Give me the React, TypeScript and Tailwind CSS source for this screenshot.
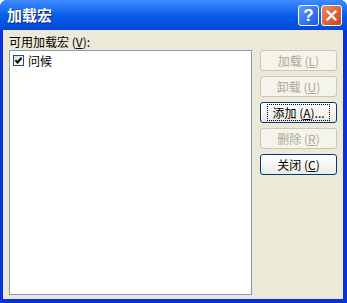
import React from "react";

const font = { fontFamily: '"Noto Sans CJK SC", "Liberation Sans", sans-serif' };

function XpButton({ label, hotkey, suffix = "", disabled = false, focused = false }) {
  return (
    <button
      className={
        "h-[21px] w-[77px] rounded-[3px] border text-[12px] leading-none flex items-center justify-center " +
        (disabled
          ? "border-[#c9c7ba] bg-[#f5f4ea] text-[#aca899]"
          : "border-[#003c74] bg-gradient-to-b from-[#ffffff] to-[#ecebe6] text-black")
      }
    >
      <span
        className={
          "flex items-center px-1 h-[15px] " +
          (focused ? "outline outline-1 outline-dotted outline-black" : "")
        }
      >
        {label} (<span className="underline underline-offset-1">{hotkey}</span>){suffix}
      </span>
    </button>
  );
}

export default function App() {
  return (
    <div className="w-[347px] h-[303px] flex flex-col rounded-t-[7px] bg-[#0831d9] overflow-hidden" style={font}>
      {/* title bar */}
      <div className="h-[30px] flex items-center justify-between pl-[7px] pr-[5px] bg-gradient-to-b from-[#3c8dff] via-[#0a5ee8] to-[#0449d8]">
        <span className="text-white font-bold text-[15px] [text-shadow:1px_1px_0_#0a1e80]">加载宏</span>
        <div className="flex gap-[2px]">
          <div className="w-[21px] h-[21px] rounded-[3px] border border-white bg-gradient-to-br from-[#5b9bff] to-[#1559e0] flex items-center justify-center text-white font-bold text-[17px] leading-none" style={{ fontFamily: '"Liberation Sans", sans-serif' }}>
            ?
          </div>
          <div className="w-[21px] h-[21px] rounded-[3px] border border-white bg-gradient-to-br from-[#f08a60] to-[#c9401a] flex items-center justify-center">
            <svg width="11" height="11" viewBox="0 0 11 11">
              <path d="M1.5 1.5 L9.5 9.5 M9.5 1.5 L1.5 9.5" stroke="white" strokeWidth="2.2" strokeLinecap="square" />
            </svg>
          </div>
        </div>
      </div>
      {/* client */}
      <div className="flex-1 flex ml-[3px] mr-[4px] mb-[4px] bg-[#ece9d8] pl-[6px] pt-[4px] pb-[4px]">
        <div className="flex flex-col">
          <div className="text-[12px] leading-[16px] h-[16px] text-black">
            可用加载宏 (<span className="underline underline-offset-1">V</span>):
          </div>
          <div className="w-[243px] h-[245px] border border-[#7f9db9] bg-white px-[3px] pt-[2px]">
            <div className="flex items-center gap-[4px]">
              <div className="w-[11px] h-[11px] border border-[#1c5180] bg-gradient-to-br from-[#dcdcd7] to-white flex items-center justify-center">
                <svg width="7" height="7" viewBox="0 0 7 7">
                  <path d="M0.5 3 L2.5 5.5 L6.5 0.8" fill="none" strokeWidth="2" stroke="#000" />
                </svg>
              </div>
              <span className="text-[12px] leading-[15px] text-black">问候</span>
            </div>
          </div>
        </div>
        <div className="flex flex-col gap-[5px] ml-[8px] pt-[16px]">
          <XpButton label="加载" hotkey="L" disabled />
          <XpButton label="卸载" hotkey="U" disabled />
          <XpButton label="添加" hotkey="A" suffix="..." focused />
          <XpButton label="删除" hotkey="R" disabled />
          <XpButton label="关闭" hotkey="C" />
        </div>
      </div>
    </div>
  );
}
